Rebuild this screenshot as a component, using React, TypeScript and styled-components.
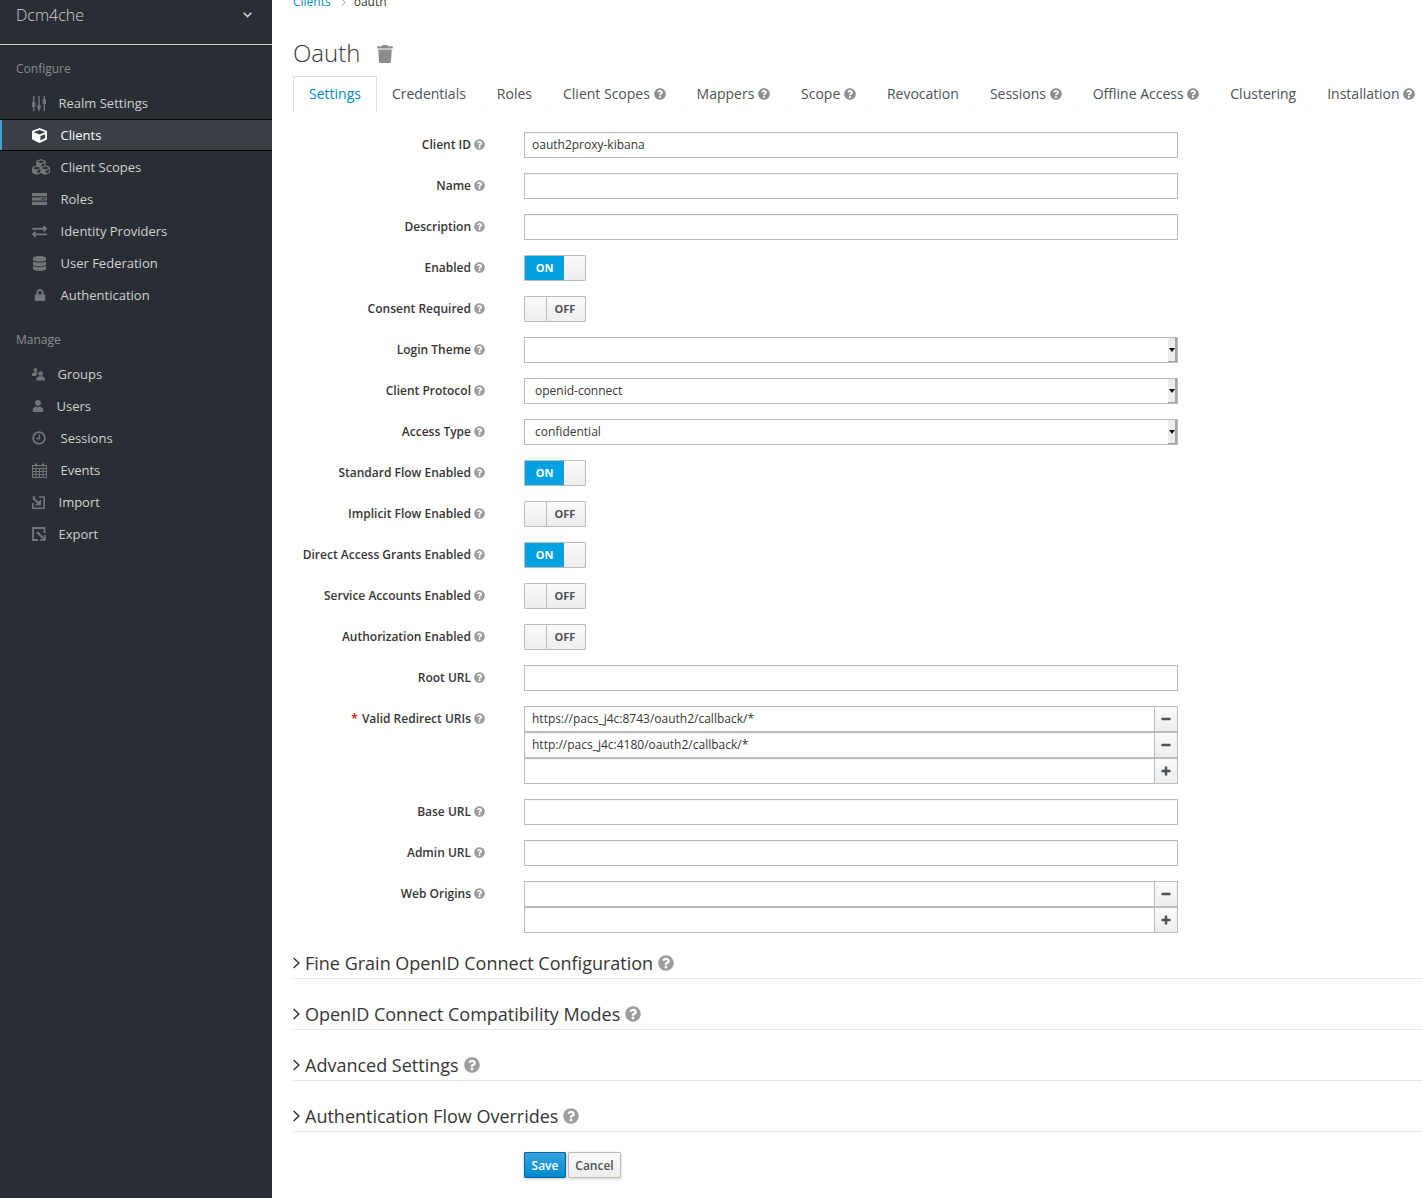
import React from "react";
import styled, { createGlobalStyle } from "styled-components";
import {
  FaCube, FaCubes, FaExchangeAlt, FaDatabase, FaLock, FaUser,
  FaQuestionCircle, FaTrash, FaMinus, FaPlus,
} from "react-icons/fa";

const Global = createGlobalStyle`
  html, body { margin: 0; padding: 0; height: 1198px; overflow: hidden; background: #fff; }
  body { font-family: "Open Sans", "Liberation Sans", sans-serif; color: #363636; font-size: 12px; }
  * { box-sizing: border-box; }
`;

const Page = styled.div`display: flex; height: 1198px; overflow: hidden;`;
const Sidebar = styled.aside`width: 272px; flex: none; background: #292e34; color: #d1d1d1;`;
const RealmHeader = styled.div`
  height: 45px; border-bottom: 1px solid #d1d1d1; display: flex; justify-content: space-between;
  padding: 3px 20px 0 16px; font-size: 16px; font-weight: 300; line-height: 24px; color: #d1d1d1;
  svg { margin-top: 7px; }
`;
const NavHeading = styled.h3<{ $top: number }>`
  margin: ${(p) => p.$top}px 0 9px; padding-left: 16px; font-size: 12px; font-weight: 400; line-height: 18px; color: #8b8d8f;
`;
const NavList = styled.ul`list-style: none; margin: 0; padding: 0;`;
const NavItem = styled.li<{ $active?: boolean }>`
  height: 32px; display: flex; align-items: center; padding-left: 32px; font-size: 13px;
  color: ${(p) => (p.$active ? "#fff" : "#d1d1d1")};
  background: ${(p) => (p.$active ? "#393f44" : "transparent")};
  border-top: 1px solid ${(p) => (p.$active ? "#030303" : "transparent")};
  border-bottom: 1px solid ${(p) => (p.$active ? "#030303" : "transparent")};
  box-shadow: ${(p) => (p.$active ? "inset 2px 0 0 #39a5dc" : "none")};
`;
const NavIcon = styled.span<{ $w: number; $active?: boolean }>`
  width: ${(p) => p.$w}px; flex: none; display: flex; align-items: center;
  color: ${(p) => (p.$active ? "#fff" : "#72767b")};
`;

const Main = styled.main`flex: 1; min-width: 0; padding-left: 21px;`;
const Breadcrumb = styled.div`
  margin-top: -7px; height: 18px; display: flex; align-items: center; line-height: 18px; font-size: 12px;
  a { color: #0088ce; }
  svg { margin: 0 7px 0 9px; }
`;
const Title = styled.h1`
  margin: 24px 0 0; height: 36px; display: flex; align-items: center; gap: 17px;
  font-size: 24px; font-weight: 300; line-height: 36px; color: #363636;
  svg { color: #8b8d8f; width: 16px; height: 18px; margin-top: 2px; }
`;
const Tabs = styled.nav`
  display: flex; height: 36px; margin-top: 5px; border-bottom: 1px solid #ededed;
`;
const Tab = styled.div<{ $active?: boolean }>`
  height: 36px; padding: 0 15px 2px; display: flex; flex: none; align-items: center; gap: 3.7px; font-size: 14px; white-space: nowrap;
  color: ${(p) => (p.$active ? "#0088ce" : "#4d5258")};
  background: #fff;
  border-style: solid;
  border-color: #ddd;
  border-width: ${(p) => (p.$active ? "1px 1px 0" : "0")};
  margin-right: ${(p) => (p.$active ? "0" : "1px")};
  svg { color: #8b8d8f; width: 12px; height: 12px; margin-top: 1px; }
`;

const Form = styled.form`margin-top: 20px;`;
const Row = styled.div`
  display: grid; grid-template-columns: 192px 654px; column-gap: 39px; margin-bottom: 15px; align-items: start;
`;
const Label = styled.label`
  height: 26px; padding-bottom: 2px; display: flex; align-items: center; justify-content: flex-end; gap: 3px;
  font-size: 12px; font-weight: 600; color: #363636; white-space: nowrap;
  svg { color: #9c9c9c; width: 11px; height: 11px; margin-top: 1px; }
  em { color: #c00; font-style: normal; margin-right: 1px; }
`;
const TextInput = styled.input`
  display: block; width: 100%; height: 26px; border: 1px solid #bbb; padding: 0 7px 2px; margin: 0;
  font: 12px "Open Sans", sans-serif; color: #363636; background: #fff; outline: none; border-radius: 0;
  box-shadow: inset 0 1px 1px rgba(3, 3, 3, 0.04);
`;
const Select = styled.div`
  height: 26px; border: 1px solid #bbb; display: flex; align-items: stretch; font-size: 12px; background: #fff;
`;
const SelectValue = styled.span`flex: 1; padding-left: 10px; line-height: 24px; color: #363636;`;
const SelectArrow = styled.span`
  width: 9px; background: #ececec; border-right: 2px solid #a4a4a4; border-bottom: 1px solid #a4a4a4;
  display: flex; align-items: center; justify-content: center;
  &::after { content: ""; border: 3px solid transparent; border-top: 4px solid #111; border-bottom: 0; }
`;
const Toggle = styled.div`
  width: 62px; height: 26px; border: 1px solid #bbb; border-radius: 1px; display: flex; overflow: hidden;
  font-size: 11px; font-weight: 700; line-height: 24px; text-align: center;
`;
const ToggleOn = styled.span`width: 39px; background: #00a1e0; color: #fff;`;
const ToggleOff = styled.span`flex: 1; padding-right: 2px; color: #4d5258; background: linear-gradient(#fafafa, #ededed); border-left: 1px solid #bbb;`;
const Handle = styled.span<{ $w: number }>`
  flex: ${(p) => (p.$w ? `0 0 ${p.$w}px` : "1")}; background: linear-gradient(#fafafa, #ededed);
`;
const MultiRow = styled.div`display: flex;`;
const MultiInput = styled(TextInput)`flex: 1; min-width: 0; border-right: none;`;
const AddonButton = styled.span`
  width: 24px; height: 26px; flex: none; border: 1px solid #bbb; background: linear-gradient(#fafafa, #ededed);
  display: flex; align-items: center; justify-content: center; color: #4d5258;
  svg { width: 10px; height: 10px; stroke: currentColor; stroke-width: 30; }
`;
const Section = styled.h2<{ $gap: number }>`
  margin: ${(p) => p.$gap}px 0 0; height: 30px; border-bottom: 1px solid #e5e5e5;
  display: flex; align-items: center; font-size: 18px; font-weight: 400; color: #363636; line-height: 28px; padding-bottom: 2px;
  > svg:first-child { margin: 0 3px 0 -3px; flex: none; }
  > svg:last-child { width: 16px; height: 16px; margin-left: 5px; color: #9c9c9c; }
`;
const Actions = styled.div`display: flex; gap: 2px; margin: 20px 0 0 231px;`;
const SaveButton = styled.button`
  height: 26px; width: 42px; padding: 0; border: 1px solid #00659c; border-radius: 1px; font: 600 12px "Open Sans", sans-serif; color: #fff;
  background: linear-gradient(#39a5dc, #0088ce);
  box-shadow: 0 1px 3px rgba(0,0,0,.2);
`;
const CancelButton = styled.button`
  height: 26px; width: 53px; padding: 0; border: 1px solid #bbb; border-radius: 1px; font: 600 12px "Open Sans", sans-serif; color: #4d5258;
  background: linear-gradient(#fafafa, #ededed);
  box-shadow: 0 1px 3px rgba(0,0,0,.2);
`;

const Chevron = ({ size, dir, color, weight = 1.4 }: { size: number; dir: "right" | "down"; color: string; weight?: number }) => (
  <svg width={size} height={size} viewBox="0 0 10 10" fill="none" stroke={color} strokeWidth={weight * (10 / size)}>
    <path d={dir === "right" ? "M3 .8 7.4 5 3 9.2" : "M.8 3 5 7.4 9.2 3"} />
  </svg>
);
const Sliders = () => (
  <svg width="14" height="15" viewBox="0 0 14 15" fill="currentColor">
    <rect x="1" y="0" width="1.4" height="15" /><rect x="6.3" y="0" width="1.4" height="15" /><rect x="11.6" y="0" width="1.4" height="15" />
    <rect x="0" y="6" width="3.4" height="5" rx=".5" /><rect x="5.3" y="9" width="3.4" height="4" rx=".5" /><rect x="10.6" y="3" width="3.4" height="5" rx=".5" />
  </svg>
);
const RolesIcon = () => (
  <svg width="15" height="12" viewBox="0 0 15 12" fill="currentColor">
    <rect width="15" height="3.2" /><rect y="4.4" width="15" height="3.2" /><rect y="8.8" width="15" height="3.2" />
    <rect x="9" y="5.5" width="5" height="1" fill="#292e34" />
  </svg>
);
const GroupsIcon = () => (
  <svg width="13" height="13" viewBox="0 0 13 13" fill="currentColor">
    <circle cx="3.5" cy="2" r="1.9" /><path d="M0 8V6.200C0 5 1.400 4.300 3.500 4.300c.8 0 1.500.1 2 .4-.5.5-.7 1.300-.2 2.100C4.300 7 3.700 7.400 3.300 8z" />
    <circle cx="8.700" cy="5.500" r="2.300" /><path d="M4.300 12.500v-1.700c0-1.600 1.900-2.500 4.400-2.500s4.300.9 4.300 2.500v1.700z" />
  </svg>
);
const ClockIcon = () => (
  <svg width="14" height="14" viewBox="0 0 14 14" fill="none" stroke="currentColor" strokeWidth="1.7">
    <circle cx="7" cy="7" r="5.900" /><path d="M7.500 3.500v4H4.500" strokeWidth="1.300" />
  </svg>
);
const CalendarIcon = () => (
  <svg width="15" height="15" viewBox="0 0 15 15" fill="none" stroke="currentColor" strokeWidth="1">
    <rect x=".5" y="2.500" width="14" height="12" /><path d="M.5 5.500h14M.5 8.500h14M.5 11.500h14M4 5.500v9M7.500 5.500v9M11 5.500v9" />
    <path d="M4 .5v3M11 .5v3" strokeWidth="2" />
  </svg>
);
const ImportIcon = () => (
  <svg width="13" height="13" viewBox="0 0 13 13" fill="none" stroke="currentColor" strokeWidth="1.600">
    <path d="M.8 1H3M7 1h5.200v11.200H.8V7" /><path d="M1 2l7 6.500" strokeWidth="2" /><path d="M3.500 8.800h5V3.800" fill="currentColor" strokeWidth="1" />
  </svg>
);
const ExportIcon = () => (
  <svg width="14" height="14" viewBox="0 0 14 14" fill="none" stroke="currentColor" strokeWidth="1.800">
    <path d="M12.500 6V1H1v12h5" /><path d="M5 5l8 8" strokeWidth="2" /><path d="M8 13h5V8" strokeWidth="1.600" />
  </svg>
);

const configure = [
  { t: "Realm Settings", w: 26.5, i: <Sliders /> },
  { t: "Clients", w: 28.5, i: <FaCube size={15} />, active: true },
  { t: "Client Scopes", w: 28.5, i: <FaCubes size={18} /> },
  { t: "Roles", w: 28.5, i: <RolesIcon /> },
  { t: "Identity Providers", w: 28.5, i: <FaExchangeAlt size={15} /> },
  { t: "User Federation", w: 28.5, i: <FaDatabase size={15} /> },
  { t: "Authentication", w: 28.5, i: <FaLock size={12} style={{ marginLeft: 2 }} /> },
];
const manage = [
  { t: "Groups", w: 25.5, i: <GroupsIcon /> },
  { t: "Users", w: 24.5, i: <FaUser size={12} /> },
  { t: "Sessions", w: 28.5, i: <ClockIcon /> },
  { t: "Events", w: 28.5, i: <CalendarIcon /> },
  { t: "Import", w: 26.5, i: <ImportIcon /> },
  { t: "Export", w: 26.5, i: <ExportIcon /> },
];
const tabs: [string, boolean][] = [
  ["Settings", false], ["Credentials", false], ["Roles", false], ["Client Scopes", true], ["Mappers", true], ["Scope", true],
  ["Revocation", false], ["Sessions", true], ["Offline Access", true], ["Clustering", false], ["Installation", true],
];

const Field = ({ label, required, children }: { label: string; required?: boolean; children?: React.ReactNode }) => (
  <Row>
    <Label>{required && <em>*</em>}{required ? " " : ""}{label}<FaQuestionCircle /></Label>
    <div>{children}</div>
  </Row>
);
const Text = ({ label, value = "" }: { label: string; value?: string }) => (
  <Field label={label}><TextInput readOnly value={value} /></Field>
);
const Switch = ({ label, on }: { label: string; on?: boolean }) => (
  <Field label={label}>
    <Toggle>
      {on ? <><ToggleOn>ON</ToggleOn><Handle $w={0} /></> : <><Handle $w={21} /><ToggleOff>OFF</ToggleOff></>}
    </Toggle>
  </Field>
);
const Choice = ({ label, value = "" }: { label: string; value?: string }) => (
  <Field label={label}><Select><SelectValue>{value}</SelectValue><SelectArrow /></Select></Field>
);
const Multi = ({ label, values, required }: { label: string; values: string[]; required?: boolean }) => (
  <Field label={label} required={required}>
    {values.map((v, i) => (
      <MultiRow key={i}>
        <MultiInput readOnly value={v} />
        <AddonButton>{i === values.length - 1 ? <FaPlus /> : <FaMinus />}</AddonButton>
      </MultiRow>
    ))}
  </Field>
);
const Collapsed = ({ title, gap }: { title: string; gap: number }) => (
  <Section $gap={gap}><Chevron size={12} dir="right" color="#363636" weight={1.5} />{title}<FaQuestionCircle /></Section>
);

export default function App() {
  return (
    <Page>
      <Global />
      <Sidebar>
        <RealmHeader>Dcm4che<Chevron size={9} dir="down" color="#d1d1d1" weight={1.6} /></RealmHeader>
        <NavHeading $top={15}>Configure</NavHeading>
        <NavList>
          {configure.map((n) => (
            <NavItem key={n.t} $active={n.active}><NavIcon $w={n.w} $active={n.active}>{n.i}</NavIcon>{n.t}</NavItem>
          ))}
        </NavList>
        <NavHeading $top={20}>Manage</NavHeading>
        <NavList>
          {manage.map((n) => (
            <NavItem key={n.t}><NavIcon $w={n.w}>{n.i}</NavIcon>{n.t}</NavItem>
          ))}
        </NavList>
      </Sidebar>
      <Main>
        <Breadcrumb><a>Clients</a><Chevron size={7} dir="right" color="#9c9c9c" weight={1} /><span>oauth</span></Breadcrumb>
        <Title>Oauth<FaTrash /></Title>
        <Tabs>
          {tabs.map(([t, h], i) => (
            <Tab key={t} $active={i === 0}>{t}{h && <FaQuestionCircle />}</Tab>
          ))}
        </Tabs>
        <Form>
          <Text label="Client ID" value="oauth2proxy-kibana" />
          <Text label="Name" />
          <Text label="Description" />
          <Switch label="Enabled" on />
          <Switch label="Consent Required" />
          <Choice label="Login Theme" />
          <Choice label="Client Protocol" value="openid-connect" />
          <Choice label="Access Type" value="confidential" />
          <Switch label="Standard Flow Enabled" on />
          <Switch label="Implicit Flow Enabled" />
          <Switch label="Direct Access Grants Enabled" on />
          <Switch label="Service Accounts Enabled" />
          <Switch label="Authorization Enabled" />
          <Text label="Root URL" />
          <Multi label="Valid Redirect URIs" required values={["https://pacs_j4c:8743/oauth2/callback/*", "http://pacs_j4c:4180/oauth2/callback/*", ""]} />
          <Text label="Base URL" />
          <Text label="Admin URL" />
          <Multi label="Web Origins" values={["", ""]} />
          <Collapsed title="Fine Grain OpenID Connect Configuration" gap={16} />
          <Collapsed title="OpenID Connect Compatibility Modes" gap={21} />
          <Collapsed title="Advanced Settings" gap={21} />
          <Collapsed title="Authentication Flow Overrides" gap={21} />
          <Actions>
            <SaveButton type="button">Save</SaveButton>
            <CancelButton type="button">Cancel</CancelButton>
          </Actions>
        </Form>
      </Main>
    </Page>
  );
}
